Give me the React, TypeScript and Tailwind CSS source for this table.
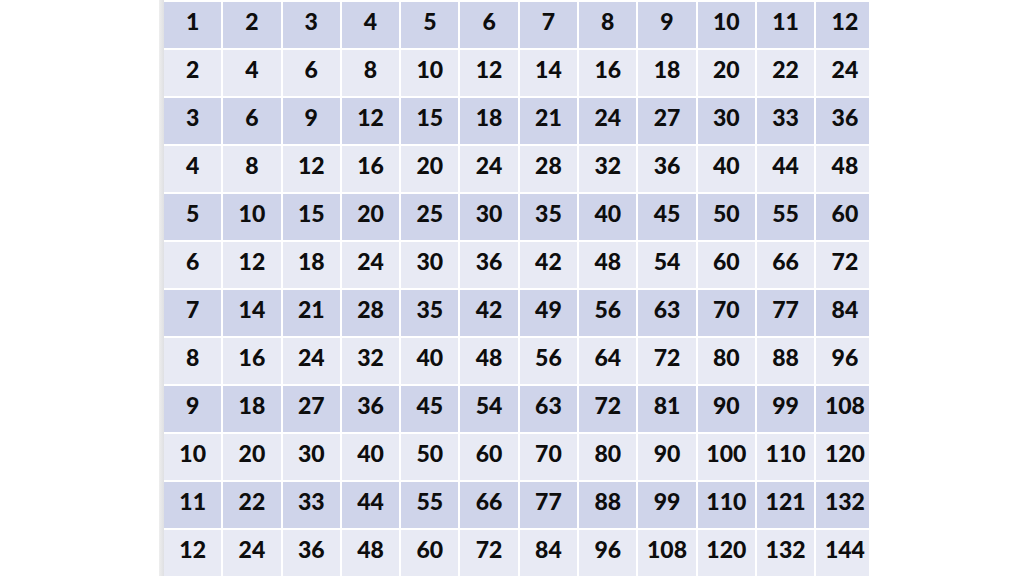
const SIZE = 12;

const rows = Array.from({ length: SIZE }, (_, r) =>
  Array.from({ length: SIZE }, (_, c) => (r + 1) * (c + 1))
);

export default function App() {
  return (
    <div className="w-[1024px] h-[576px] bg-white overflow-hidden flex">
      {/* left gutter + grey page edge */}
      <div className="w-[159px] shrink-0" />
      <div className="w-[5px] shrink-0 bg-gradient-to-r from-[#eeeeee] to-[#dfe0e3]" />

      {/* table is cropped on the right edge */}
      <div className="w-[705px] pt-[2px] overflow-hidden">
        <div
          className="grid grid-cols-[repeat(12,57.3px)] grid-rows-[repeat(12,46px)] gap-[2px] bg-white"
          style={{ fontFamily: "Lato, 'Open Sans', sans-serif" }}
        >
          {rows.map((row, r) =>
            row.map((value, c) => (
              <div
                key={`${r}-${c}`}
                className={
                  r % 2 === 0
                    ? "flex items-center justify-center pb-[8px] bg-[#cfd4ea] text-[23px] font-black text-[#0d0d0d]"
                    : "flex items-center justify-center pb-[8px] bg-[#e8eaf4] text-[23px] font-black text-[#0d0d0d]"
                }
              >
                {value}
              </div>
            ))
          )}
        </div>
      </div>
    </div>
  );
}
